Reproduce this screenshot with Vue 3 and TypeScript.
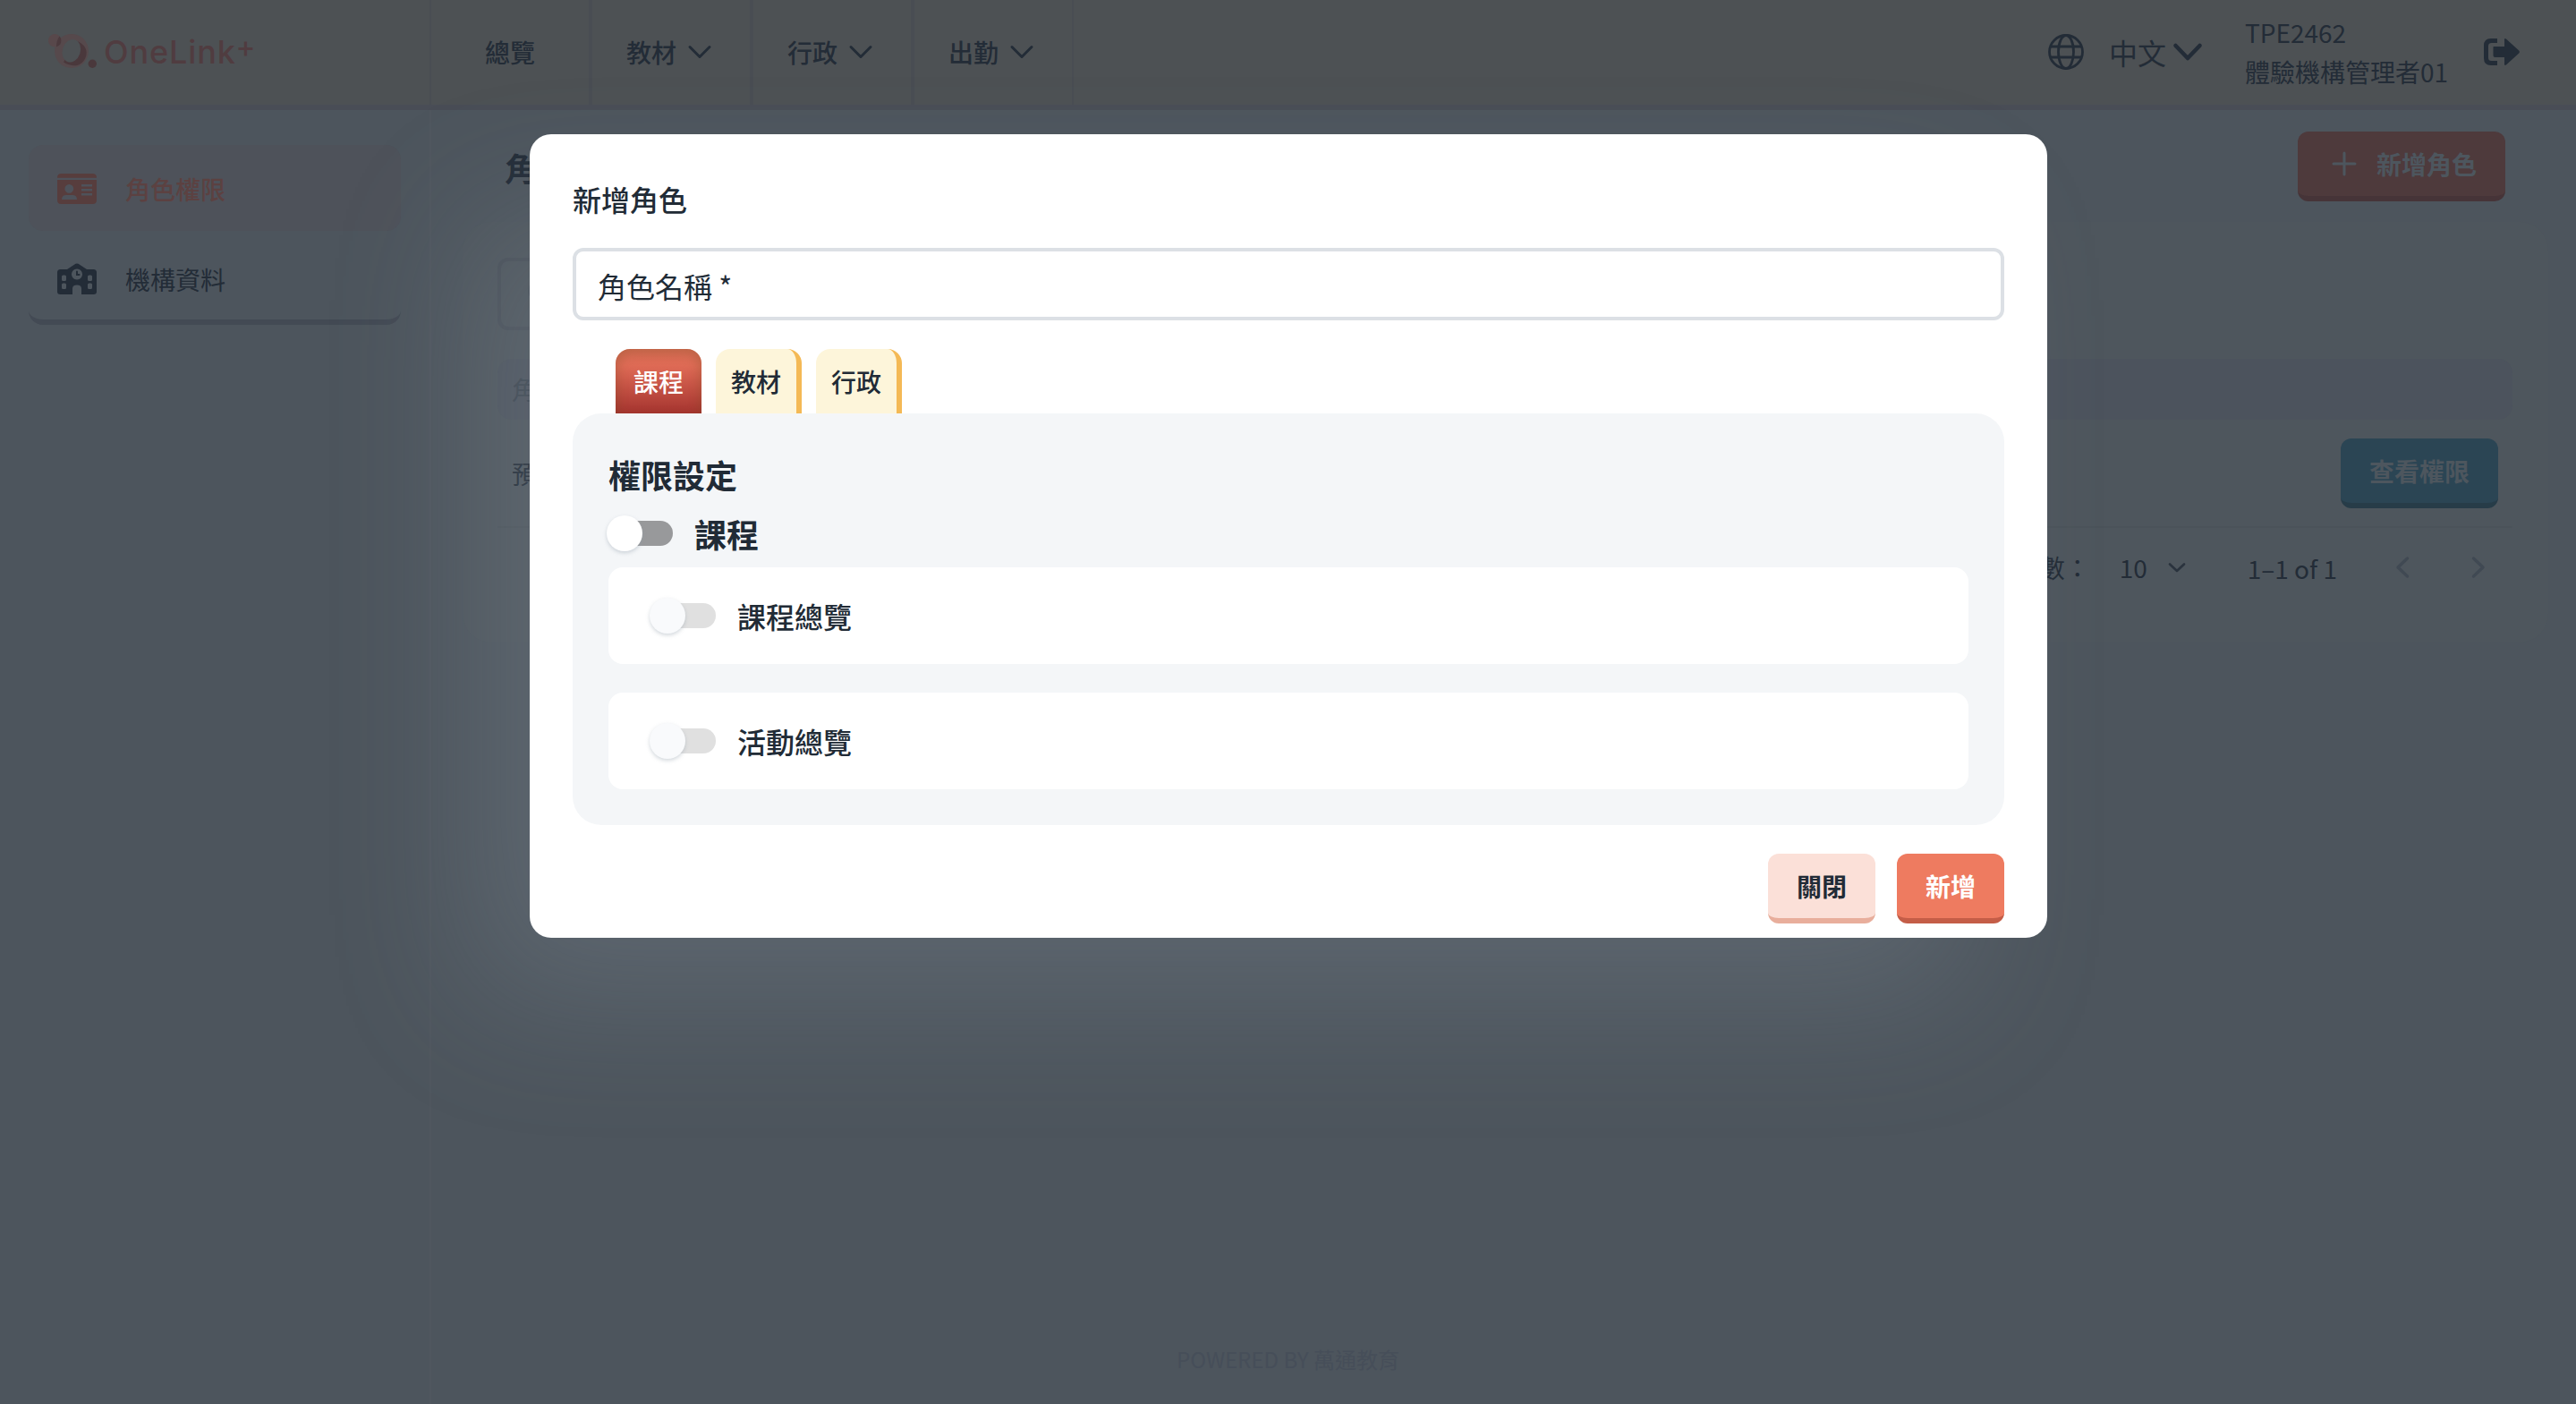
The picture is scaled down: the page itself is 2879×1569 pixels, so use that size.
<script setup lang="ts">
import { ref } from 'vue'

interface NavItem {
  label: string
  menu: boolean
}

interface Permission {
  label: string
  enabled: boolean
}

const navItems: NavItem[] = [
  { label: '總覽', menu: false },
  { label: '教材', menu: true },
  { label: '行政', menu: true },
  { label: '出勤', menu: true },
]

const tabs: string[] = ['課程', '教材', '行政']
const activeTab = ref('課程')
const groupEnabled = ref(false)
const permissions = ref<Permission[]>([
  { label: '課程總覽', enabled: false },
  { label: '活動總覽', enabled: false },
])
</script>

<template>
  <div class="app">
    <header class="topbar">
      <div class="brand">
        <svg class="logo" width="240" height="44" viewBox="0 0 240 44">
          <circle cx="26" cy="19" r="19" fill="#56494c" />
          <circle cx="7.2" cy="7.300" r="7.200" fill="#58484b" />
          <path d="M12.500 2.500a7.200 7.200 0 0 1-3.500 11.800A19 19 0 0 1 12.500 2.500Z" fill="#4b3a3e" />
          <path d="M31 7.500C41 11 45 19 41.500 26.500C37.500 36 28 38 17 31.500Z" fill="#4a383c" />
          <ellipse cx="25.800" cy="18.800" rx="10" ry="13" transform="rotate(18 25.800 18.800)" fill="#4d5154" />
          <circle cx="49.300" cy="33.300" r="4.700" fill="#4a383c" />
          <text x="62" y="33" class="logo-text" textLength="147" lengthAdjust="spacing">OneLink</text>
          <text x="209.500" y="26" class="logo-plus">+</text>
        </svg>
      </div>
      <nav class="nav">
        <div v-for="item in navItems" :key="item.label" class="nav-item" :class="{ 'has-menu': item.menu }">
          <span>{{ item.label }}</span>
          <svg v-if="item.menu" width="28" height="28" viewBox="0 0 28 28">
            <path d="M3 8.500L14 19.500L25 8.500" fill="none" stroke="#232c37" stroke-width="3" stroke-linecap="round" stroke-linejoin="round" />
          </svg>
        </div>
      </nav>
      <div class="account">
        <svg class="globe" width="40" height="40" viewBox="0 0 40 40" fill="none" stroke="#232c37" stroke-width="2.800">
          <circle cx="20" cy="20" r="18.500" />
          <ellipse cx="20" cy="20" rx="8.500" ry="18.500" />
          <path d="M2.500 14H37.500M2.500 26H37.500" />
        </svg>
        <div class="lang">
          <span>中文</span>
          <svg width="40" height="40" viewBox="0 0 40 40">
            <path d="M6.500 13L20 27L33.500 13" fill="none" stroke="#232c37" stroke-width="4.600" stroke-linecap="round" stroke-linejoin="round" />
          </svg>
        </div>
        <div class="user">
          <div>TPE2462</div>
          <div>體驗機構管理者01</div>
        </div>
        <svg class="logout" width="40" height="30" viewBox="0 0 40 30">
          <path d="M15 0H8Q0 0 0 8V22Q0 30 8 30H15V25H8.500Q5 25 5 21.500V8.500Q5 5 8.500 5H15Z" fill="#232c37" />
          <path d="M11 9H23V1.500Q23-1 25.200 .8L39.200 13.500Q40.600 15 39.200 16.500L25.200 29.200Q23 31 23 28.500V21H12.500Q10.500 21 10.500 19V9.500Z" fill="#232c37" />
        </svg>
      </div>
    </header>

    <aside class="sidebar">
      <div class="side-item active">
        <svg width="44" height="36" viewBox="0 0 44 36">
          <path d="M0 5.700V5.500Q0 1 4.500 1H39.500Q44 1 44 5.500V5.700Z" fill="#573d3d" />
          <path fill-rule="evenodd" fill="#573d3d" d="M0 8H44V30.500Q44 35 39.500 35H4.500Q0 35 0 30.500ZM13.300 13a4.900 4.900 0 1 0 .01 0ZM5 30H22Q22 25 17 25H10Q5 25 5 30ZM27 13V15.500H39V13ZM27 18V20.500H39V18ZM27 23V25.500H39V23Z" />
        </svg>
        <span>角色權限</span>
      </div>
      <div class="side-item raised">
        <svg width="44" height="36" viewBox="0 0 44 36">
          <path fill-rule="evenodd" fill="#232c37" d="M3.500 7H11L20.500 .8Q22 0 23.500 .8L33 7H40.500Q44 7 44 10.500V32Q44 35 40.500 35H27V28.500Q27 24.500 22 24.500Q17 24.500 17 28.500V35H3.500Q0 35 0 32V10.500Q0 7 3.500 7ZM22 6.500a6 6 0 1 0 .01 0ZM6.500 13.500Q5 13.500 5 15V18.500Q5 20 6.500 20H8.500Q10 20 10 18.500V15Q10 13.500 8.500 13.500ZM6.500 22.500Q5 22.500 5 24V27.500Q5 29 6.500 29H8.500Q10 29 10 27.500V24Q10 22.500 8.500 22.500ZM35.500 13.500Q34 13.500 34 15V18.500Q34 20 35.500 20H37.500Q39 20 39 18.500V15Q39 13.500 37.500 13.500ZM35.500 22.500Q34 22.500 34 24V27.500Q34 29 35.500 29H37.500Q39 29 39 27.500V24Q39 22.500 37.500 22.500Z" />
          <path d="M22 9.500V13H24.500" fill="none" stroke="#232c37" stroke-width="2" stroke-linecap="round" />
        </svg>
        <span>機構資料</span>
      </div>
    </aside>

    <main class="main">
      <div class="page-head">
        <h1>角色權限</h1>
        <button class="btn btn-add">
          <svg width="28" height="28" viewBox="0 0 28 28">
            <path d="M14 2V26M2 14H26" stroke="#4d565e" stroke-width="3" stroke-linecap="round" />
          </svg>
          <span>新增角色</span>
        </button>
      </div>
      <section class="card">
        <div class="search">
          <svg width="36" height="36" viewBox="0 0 36 36" fill="none" stroke="#464e58" stroke-width="3">
            <circle cx="14" cy="14" r="12" />
            <path d="M23 23L33 33" stroke-linecap="round" />
          </svg>
        </div>
        <div class="thead">角色名稱</div>
        <div class="trow">
          <span>預設角色</span>
          <button class="btn btn-view">查看權限</button>
        </div>
        <div class="pager">
          <span class="per-page">每頁行數：</span>
          <span class="size">10</span>
          <svg class="size-arrow" width="24" height="24" viewBox="0 0 24 24">
            <path d="M4 8.500L12 16L20 8.500" fill="none" stroke="#2a333e" stroke-width="2.600" stroke-linecap="round" stroke-linejoin="round" />
          </svg>
          <span class="range">1–1 of 1</span>
          <svg class="prev" width="24" height="24" viewBox="0 0 24 24">
            <path d="M16.500 2L6 12L16.500 22" fill="none" stroke="#404953" stroke-width="3.400" stroke-linecap="round" stroke-linejoin="round" />
          </svg>
          <svg class="next" width="24" height="24" viewBox="0 0 24 24">
            <path d="M6.500 2L17 12L6.500 22" fill="none" stroke="#404953" stroke-width="3.400" stroke-linecap="round" stroke-linejoin="round" />
          </svg>
        </div>
      </section>
    </main>

    <footer class="footer">POWERED BY 萬通教育</footer>

    <div class="dialog" role="dialog">
      <h2>新增角色</h2>
      <div class="field">角色名稱 *</div>
      <div class="tabs">
        <div
          v-for="tab in tabs"
          :key="tab"
          class="tab"
          :class="{ selected: tab === activeTab }"
          @click="activeTab = tab"
        >
          {{ tab }}
        </div>
      </div>
      <div class="panel">
        <h3>權限設定</h3>
        <div class="group" @click="groupEnabled = !groupEnabled">
          <span class="switch"><i class="track"></i><i class="thumb"></i></span>
          <span>課程</span>
        </div>
        <div v-for="p in permissions" :key="p.label" class="perm">
          <span class="switch disabled"><i class="track"></i><i class="thumb"></i></span>
          <span>{{ p.label }}</span>
        </div>
      </div>
      <div class="actions">
        <button class="btn btn-close">關閉</button>
        <button class="btn btn-submit">新增</button>
      </div>
    </div>
  </div>
</template>

<style>
body {
  margin: 0;
  background: #4d555e;
}
</style>

<style scoped>
.app {
  position: relative;
  display: grid;
  grid-template-columns: 482px 1fr;
  grid-template-rows: 123px 1fr;
  width: 2879px;
  height: 1569px;
  overflow: hidden;
  background: #4d555d;
  color: #232c37;
  font-family: "Noto Sans CJK TC", sans-serif;
  font-size: 28px;
  line-height: 44px;
}

.app *,
.app *::before {
  box-sizing: border-box;
}

svg {
  display: block;
  flex: none;
  overflow: visible;
}

h1,
h2,
h3 {
  margin: 0;
}

.topbar {
  grid-row: 1;
  grid-column: 1 / -1;
  display: flex;
  height: 123px;
  border-bottom: 6px solid #494d56;
  background: #4d5154;
}

.brand {
  width: 480px;
  padding: 38px 0 0 54px;
}

.logo-text {
  font-family: Inter, "Open Sans", sans-serif;
  font-size: 36px;
  font-weight: 500;
  fill: #503c40;
}

.logo-plus {
  font-family: Inter, "Open Sans", sans-serif;
  font-size: 33px;
  font-weight: 500;
  fill: #503c40;
}

.nav {
  display: flex;
}

.nav-item {
  display: flex;
  align-items: center;
  justify-content: center;
  width: 180px;
  padding-bottom: 1px;
  border-left: 2px solid #494d53;
  border-right: 2px solid #494d53;
  font-weight: 500;
}

.nav-item.has-menu {
  justify-content: flex-start;
  gap: 12px;
  padding-left: 38px;
}

.account {
  display: flex;
  align-items: center;
  margin-left: auto;
  padding: 0 63px 2px 0;
}

.lang {
  display: flex;
  align-items: center;
  gap: 4px;
  width: 152px;
  margin-left: 28px;
  font-size: 32px;
}

.user {
  width: 267px;
  padding-top: 1px;
}

.sidebar {
  grid-row: 2;
  grid-column: 1;
  padding: 39px 32px 0;
  border-right: 2px solid #50575f;
}

.side-item {
  display: flex;
  align-items: center;
  gap: 32px;
  width: 416px;
  height: 96px;
  padding-top: 2px;
  padding-left: 32px;
  border-radius: 16px;
  white-space: nowrap;
}

.side-item.active {
  background: #4e525a;
  color: #5c4141;
  font-weight: 500;
}

.side-item.raised {
  height: 99px;
  margin-top: 6px;
  border-bottom: 6px solid #434a54;
}

.main {
  grid-row: 2;
  grid-column: 2;
  padding: 24px 31px 0 35px;
}

.page-head {
  display: flex;
  justify-content: space-between;
  height: 101px;
  padding: 0 48px 0 47px;
}

.page-head h1 {
  padding-top: 16px;
  font-size: 36px;
  font-weight: 700;
  line-height: 48px;
}

.btn {
  display: flex;
  align-items: center;
  justify-content: center;
  height: 78px;
  padding: 0;
  border: 0;
  border-bottom: 6px solid;
  border-radius: 12px;
  font-family: inherit;
  font-size: 28px;
  font-weight: 700;
  line-height: 44px;
  white-space: nowrap;
}

.btn-add {
  justify-content: flex-start;
  gap: 22px;
  width: 232px;
  padding-left: 38px;
  border-color: #463438;
  background: #4e3a3c;
  color: #4d565e;
}

.card {
  height: 470px;
  padding: 40px 40px 0 39px;
  border-radius: 32px;
  background: #4e565d;
}

.search {
  display: flex;
  align-items: center;
  width: 640px;
  height: 81px;
  padding-left: 30px;
  border: 4px solid #495059;
  border-radius: 12px;
}

.thead {
  height: 68px;
  margin-top: 32px;
  padding: 12px 0 0 16px;
  border-radius: 16px;
  background: #4c535d;
  color: #3d4650;
}

.trow {
  display: flex;
  align-items: center;
  justify-content: space-between;
  height: 121px;
  padding: 0 16px;
  border-bottom: 2px solid #4b535a;
}

.btn-view {
  width: 176px;
  border-color: #273c48;
  background: #2b4554;
  color: #4d565e;
}

.pager {
  display: flex;
  align-items: center;
  justify-content: flex-end;
  height: 87px;
  padding-right: 26px;
}

.size {
  margin-left: 33px;
}

.size-arrow {
  margin-left: 21px;
}

.range {
  margin: 2px 62px 0 67px;
}

.next {
  margin-left: 60px;
}

.footer {
  grid-row: 2;
  grid-column: 1 / -1;
  align-self: end;
  height: 72px;
  color: #464e59;
  font-size: 24px;
  text-align: center;
}

.dialog {
  position: absolute;
  top: 150px;
  left: 592px;
  width: 1696px;
  height: 898px;
  padding: 48px 48px 0;
  border-radius: 24px;
  background: #fff;
  box-shadow: -80px 80px 160px -16px rgba(145, 158, 171, 0.24);
  color: #212b36;
}

.dialog h2 {
  font-size: 32px;
  font-weight: 500;
  line-height: 48px;
}

.field {
  height: 81px;
  margin-top: 31px;
  padding: 14px 24px 0;
  border: 4px solid #dce0e5;
  border-radius: 12px;
  font-size: 32px;
  line-height: 48px;
}

.tabs {
  display: flex;
  gap: 16px;
  margin-top: 32px;
  padding-left: 48px;
}

.tab {
  width: 96px;
  height: 72px;
  border-right: 6px solid #f4b955;
  border-radius: 16px 16px 0 0;
  background: #fdf5da;
  font-weight: 500;
  line-height: 73px;
  text-align: center;
}

.tab.selected {
  border-right: 0;
  background: linear-gradient(180deg, #e5705a 0%, #df6b56 26%, #a5342f 100%);
  box-shadow: inset 0 6px 14px rgba(110, 75, 30, 0.36);
  color: #fff;
}

.panel {
  height: 460px;
  padding: 40px;
  border-radius: 32px;
  background: #f4f6f8;
}

.panel h3 {
  font-size: 36px;
  font-weight: 700;
  line-height: 56px;
}

.group {
  display: flex;
  align-items: center;
  height: 76px;
  padding-left: 4px;
  font-size: 36px;
  font-weight: 700;
}

.switch {
  position: relative;
  flex: none;
  width: 68px;
  height: 28px;
  margin-right: 24px;
}

.track {
  display: block;
  height: 28px;
  border-radius: 14px;
  background: #98999b;
}

.thumb {
  position: absolute;
  top: -6px;
  left: -6px;
  width: 40px;
  height: 40px;
  border-radius: 50%;
  background: #fff;
  box-shadow: 0 2px 4px rgba(145, 158, 171, 0.4);
}

.switch.disabled .track {
  background: #e0e0e0;
}

.switch.disabled .thumb {
  background: #f9fafc;
}

.perm {
  display: flex;
  align-items: center;
  height: 108px;
  padding-left: 52px;
  border-radius: 16px;
  background: #fff;
  font-size: 32px;
  font-weight: 500;
}

.perm + .perm {
  margin-top: 32px;
}

.actions {
  display: flex;
  justify-content: flex-end;
  gap: 24px;
  padding-top: 32px;
}

.actions .btn {
  width: 120px;
}

.btn-close {
  border-color: #e8ae9c;
  background: #fbe0d8;
  color: #212b36;
}

.btn-submit {
  border-color: #c45d47;
  background: #ee7b60;
  color: #fff;
}
</style>
